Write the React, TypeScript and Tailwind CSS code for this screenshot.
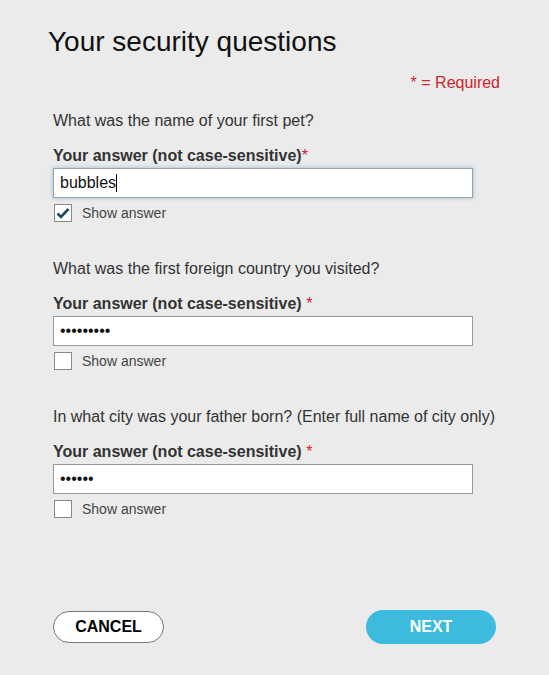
const font = { fontFamily: '"Liberation Sans", Arial, sans-serif' };

function Checkbox({ checked }: { checked?: boolean }) {
  return (
    <div className="ml-px w-[18px] h-[18px] border border-[#8a8a8a] bg-white flex items-center justify-center">
      {checked && (
        <svg width="14" height="12" viewBox="0 0 14 12">
          <path d="M1.5 6.5 L5 10 L12.5 2" fill="none" stroke="#1e4a5c" strokeWidth="2.6" />
        </svg>
      )}
    </div>
  );
}

function Question({
  question,
  value,
  masked,
  checked,
  focused,
  spaced,
  first,
}: {
  question: string;
  value: string;
  masked?: boolean;
  checked?: boolean;
  focused?: boolean;
  spaced?: boolean;
  first?: boolean;
}) {
  return (
    <div className={first ? "mt-[18px]" : "mt-[37px]"}>
      <p className="text-[16px] leading-[20px] text-[#333]">{question}</p>
      <p className="mt-[15px] text-[16px] leading-[20px] font-bold text-[#333]">
        Your answer (not case-sensitive){spaced ? " " : ""}
        <span className="text-[#d2232a] font-normal">*</span>
      </p>
      <div
        className={
          "mt-[2px] w-[420px] h-[30px] bg-white border flex items-center pl-[6px] text-[16px] text-[#111] " +
          (focused
            ? "border-[#9aa3ab] shadow-[0_0_4px_rgba(80,140,190,0.55)]"
            : "border-[#999]")
        }
      >
        {masked ? (
          <span>{value}</span>
        ) : (
          <>
            <span>{value}</span>
            <span className="w-px h-[18px] bg-black" />
          </>
        )}
      </div>
      <div className="mt-[6px] flex items-center">
        <Checkbox checked={checked} />
        <span className="ml-[10px] text-[14px] leading-[18px] text-[#444]">Show answer</span>
      </div>
    </div>
  );
}

export default function App() {
  return (
    <div className="w-[549px] h-[675px] bg-[#ebebeb] overflow-hidden" style={font}>
      <div className="pt-[26px] pl-[48px]">
        <h1 className="text-[28px] leading-[32px] text-[#111]">Your security questions</h1>
      </div>
      <div className="pl-[53px] w-[500px]">
        <p className="mt-[15px] text-right text-[16px] leading-[20px] text-[#d2232a]">* = Required</p>
        <Question
          first
          question="What was the name of your first pet?"
          value="bubbles"
          checked
          focused
        />
        <Question
          question="What was the first foreign country you visited?"
          value="•••••••••"
          masked
          spaced
        />
        <Question
          question="In what city was your father born? (Enter full name of city only)"
          value="••••••"
          masked
          spaced
        />
        <div className="mt-[92px] flex items-center justify-between w-[443px]">
          <button className="w-[111px] h-[32px] rounded-full border border-[#777] bg-white text-[16px] font-bold text-black">
            CANCEL
          </button>
          <button className="w-[130px] h-[34px] rounded-full bg-[#3dbbde] text-[16px] font-bold text-white">
            NEXT
          </button>
        </div>
      </div>
    </div>
  );
}
